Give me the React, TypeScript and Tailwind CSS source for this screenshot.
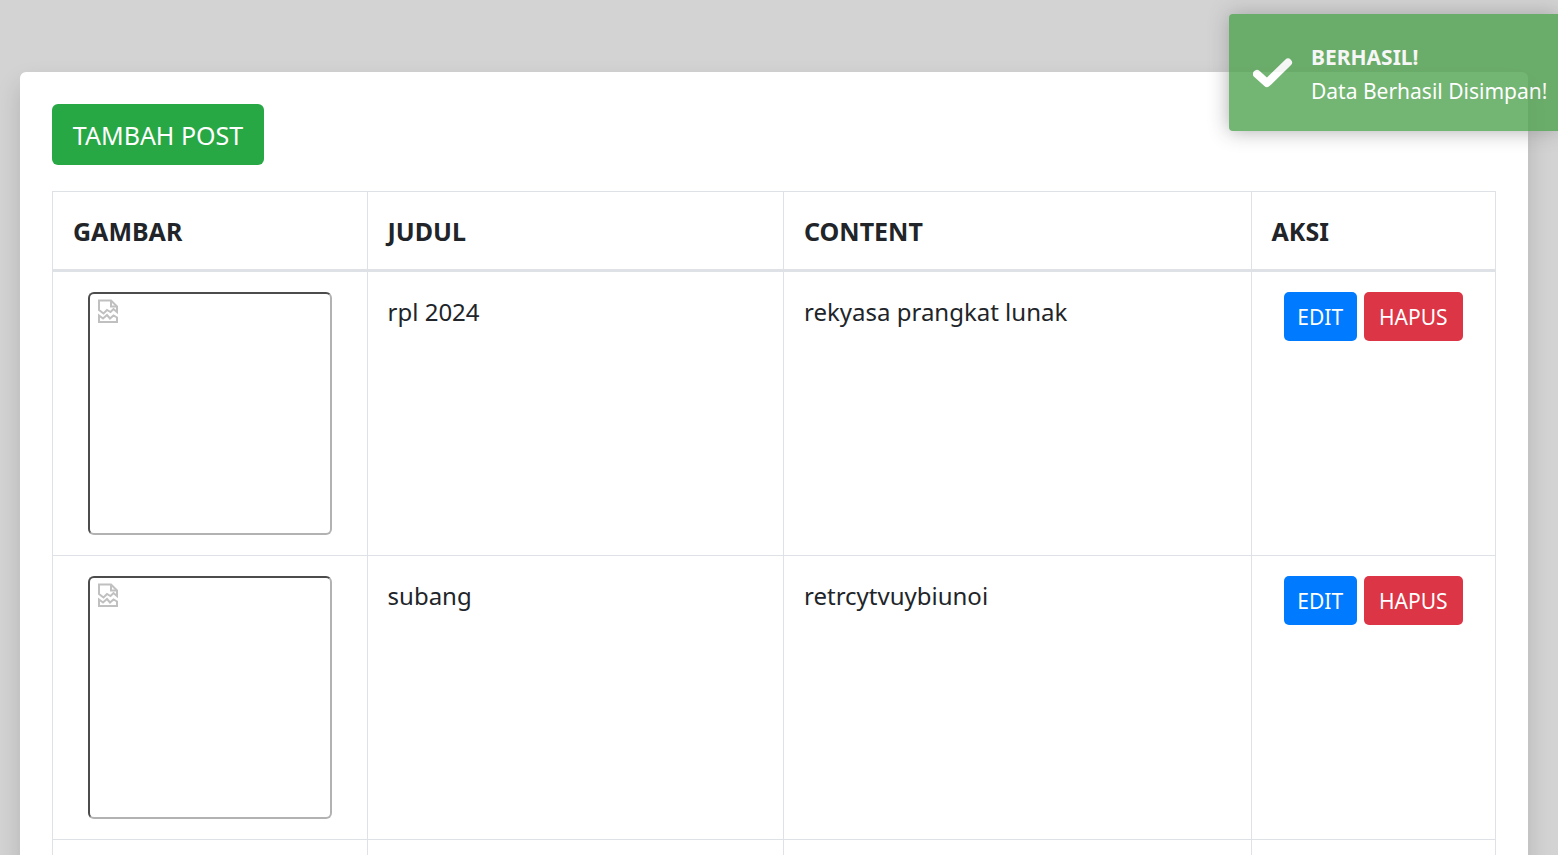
type Post = { id: number; title: string; content: string };

const posts: Post[] = [
  { id: 1, title: "rpl 2024", content: "rekyasa prangkat lunak" },
  { id: 2, title: "subang", content: "retrcytvuybiunoi" },
];

const columns = ["GAMBAR", "JUDUL", "CONTENT", "AKSI"];

const cell = "border border-[#dee2e6] px-5 text-left align-top";

function MissingImage() {
  return (
    <div className="mx-auto h-[243px] w-[244px] rounded-md border-2 border-t-[#4c4c4c] border-r-[#b2b2b2] border-b-[#b2b2b2] border-l-[#4c4c4c] pt-[5px] pl-2">
      <svg
        role="img"
        aria-label="Gambar"
        width="21"
        height="25"
        viewBox="0 0 21 25"
        fill="none"
        stroke="#c0c0c0"
        strokeWidth="2"
      >
        <path d="M1 11V1.500H13L19 7.500V13L15.500 10L12.500 13L9 11L5.500 14.500L1 11Z" />
        <path d="M13 1.500V7.500H19" />
        <path d="M1 23V16.500L5 19.500L9 16L12 19.500L15.500 16.500L19 18.500V23H1Z" />
      </svg>
    </div>
  );
}

function PostRow({ post }: { post: Post }) {
  return (
    <tr>
      <td className={`${cell} py-5`}>
        <MissingImage />
      </td>
      <td className={`${cell} py-5 leading-10`}>{post.title}</td>
      <td className={`${cell} py-5 leading-10`}>{post.content}</td>
      <td className={`${cell} py-5`}>
        <div className="flex justify-center gap-[7px] text-[21px] text-white">
          <a href="#edit" className="flex h-[49px] w-[73px] items-center justify-center rounded-[5px] bg-[#007bff]">
            EDIT
          </a>
          <button type="button" className="h-[49px] w-[99px] rounded-[5px] bg-[#dc3545]">
            HAPUS
          </button>
        </div>
      </td>
    </tr>
  );
}

function Toast() {
  return (
    <div
      role="status"
      className="absolute top-[14px] right-0 flex h-[117px] w-[329px] items-center gap-[18px] rounded-l-[4px] bg-[#51a351] pt-[2px] pl-6 text-[21px] leading-[34px] whitespace-nowrap text-white opacity-80 shadow-[0_0_20px_#999]"
    >
      <svg width="40" height="32" viewBox="0 0 40 32" fill="none" aria-hidden="true" className="shrink-0">
        <path d="M4 16L14 25L35 4.500" stroke="white" strokeWidth="8" strokeLinecap="round" strokeLinejoin="round" />
      </svg>
      <div>
        <div className="font-bold">BERHASIL!</div>
        <div>Data Berhasil Disimpan!</div>
      </div>
    </div>
  );
}

export default function App() {
  return (
    <div className="relative h-screen overflow-hidden bg-[#d3d3d3] pt-[72px] pr-[30px] pl-5 font-['Noto_Sans','Open_Sans',sans-serif] text-2xl text-[#212529]">
      <main className="rounded-md bg-white p-8 shadow-[0_12px_24px_rgba(0,0,0,0.15)]">
        <a
          href="#create"
          className="mb-[26px] flex h-[61px] w-[212px] items-center justify-center rounded-md bg-[#28a745] pt-[2px] text-[25px] text-white"
        >
          TAMBAH POST
        </a>
        <table className="w-full table-fixed border-collapse">
          <colgroup>
            <col className="w-[21.8%]" />
            <col className="w-[28.86%]" />
            <col className="w-[32.4%]" />
            <col className="w-[16.94%]" />
          </colgroup>
          <thead>
            <tr className="h-[79px]">
              {columns.map((label) => (
                <th
                  key={label}
                  scope="col"
                  className="border border-b-[3px] border-[#dee2e6] px-5 pt-[2px] text-left text-[25px] font-bold"
                >
                  {label}
                </th>
              ))}
            </tr>
          </thead>
          <tbody>
            {posts.map((post) => (
              <PostRow key={post.id} post={post} />
            ))}
            <tr className="h-[284px]">
              {columns.map((label) => (
                <td key={label} className={cell} />
              ))}
            </tr>
          </tbody>
        </table>
      </main>
      <Toast />
    </div>
  );
}
